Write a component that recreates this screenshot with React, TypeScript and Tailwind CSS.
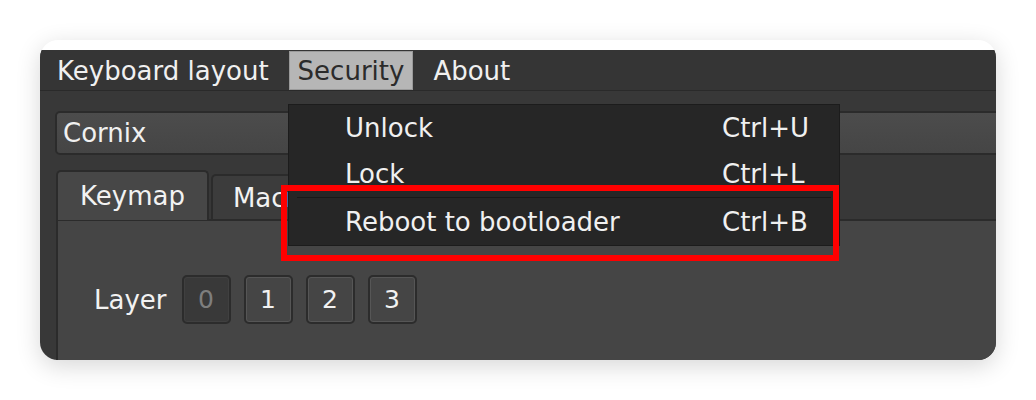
const font = { fontFamily: '"DejaVu Sans", "Liberation Sans", sans-serif' }

function LayerButton({ label, active }: { label: string; active?: boolean }) {
  return (
    <div
      className={
        active
          ? 'w-[49px] h-[49px] rounded-[5px] border-2 border-[#2c2c2c] bg-[#393939] flex items-center justify-center text-[#7e7e7e] shadow-[inset_0_0_0_1px_#404040]'
          : 'w-[49px] h-[49px] rounded-[5px] border-2 border-[#2c2c2c] bg-[#454545] flex items-center justify-center text-[#f2f2f2] shadow-[inset_0_0_0_1px_#565656]'
      }
    >
      {label}
    </div>
  )
}

function MenuItem({ label, shortcut }: { label: string; shortcut: string }) {
  return (
    <div className="h-[46px] flex items-center text-[#f0f0f0]">
      <span className="pl-[56px] w-[433px]">{label}</span>
      <span>{shortcut}</span>
    </div>
  )
}

export default function App() {
  return (
    <div className="w-[1036px] h-[400px] bg-white pt-[40px] pl-[40px]" style={font}>
      <div className="w-[956px] h-[320px] rounded-[18px] overflow-hidden bg-white pt-[10px] flex flex-col shadow-[0_6px_24px_rgba(0,0,0,0.16)] relative text-[26px] leading-none">
        <div className="flex-1 bg-[#383838] relative flex flex-col">
          {/* menu bar */}
          <div className="h-[41px] shrink-0 bg-[#353535] border-b border-[#2a2a2a] flex items-end pl-[8px] gap-[11px]">
            <div className="h-[39px] px-[9px] flex items-center text-[#f0f0f0]">Keyboard layout</div>
            <div className="h-[39px] px-[8px] flex items-center bg-[#b6b6b6] border border-[#9a9a9a] text-[#2b2b2b]">Security</div>
            <div className="h-[39px] px-[9px] flex items-center text-[#f0f0f0]">About</div>
          </div>

          {/* device combo */}
          <div className="pl-[15px] pt-[20px] shrink-0">
            <div className="h-[44px] w-[1000px] rounded-[5px] border-2 border-[#2b2b2b] bg-gradient-to-b from-[#4c4c4c] to-[#454545] flex items-center pl-[6px] text-[#f0f0f0]">
              Cornix
            </div>
          </div>

          {/* tabs */}
          <div className="pl-[16px] pt-[15px] flex items-end shrink-0 relative z-10">
            <div className="h-[50px] px-[22px] rounded-t-[5px] border-2 border-b-0 border-[#2b2b2b] bg-[#474747] flex items-center text-[#f2f2f2] -mb-[1px]">
              Keymap
            </div>
            <div className="h-[45px] ml-[2px] px-[20px] rounded-t-[5px] border-2 border-b-0 border-[#2b2b2b] bg-[#3c3c3c] flex items-center text-[#f2f2f2]">
              Macros
            </div>
          </div>

          {/* tab pane */}
          <div className="flex-1 ml-[16px] border-t-2 border-l-2 border-[#2b2b2b] bg-[#454545] pl-[36px] pt-[54px]">
            <div className="flex items-center">
              <span className="text-[#f2f2f2] mr-[15px]">Layer</span>
              <div className="flex gap-[13px] text-[25px]">
                <LayerButton label="0" active />
                <LayerButton label="1" />
                <LayerButton label="2" />
                <LayerButton label="3" />
              </div>
            </div>
          </div>

          {/* Security dropdown */}
          <div className="absolute left-[248px] top-[54px] w-[552px] h-[142px] bg-[#262626] border border-[#1c1c1c] z-20 flex flex-col">
            <MenuItem label="Unlock" shortcut="Ctrl+U" />
            <MenuItem label="Lock" shortcut="Ctrl+L" />
            <div className="h-[3px] flex items-center px-[8px]">
              <div className="h-[1px] w-full bg-[#181818]" />
            </div>
            <MenuItem label="Reboot to bootloader" shortcut="Ctrl+B" />
          </div>

          {/* highlight box */}
          <div className="absolute left-[241px] top-[135px] w-[558px] h-[76px] border-[6px] border-[#ff0000] z-30" />
        </div>
      </div>
    </div>
  )
}
